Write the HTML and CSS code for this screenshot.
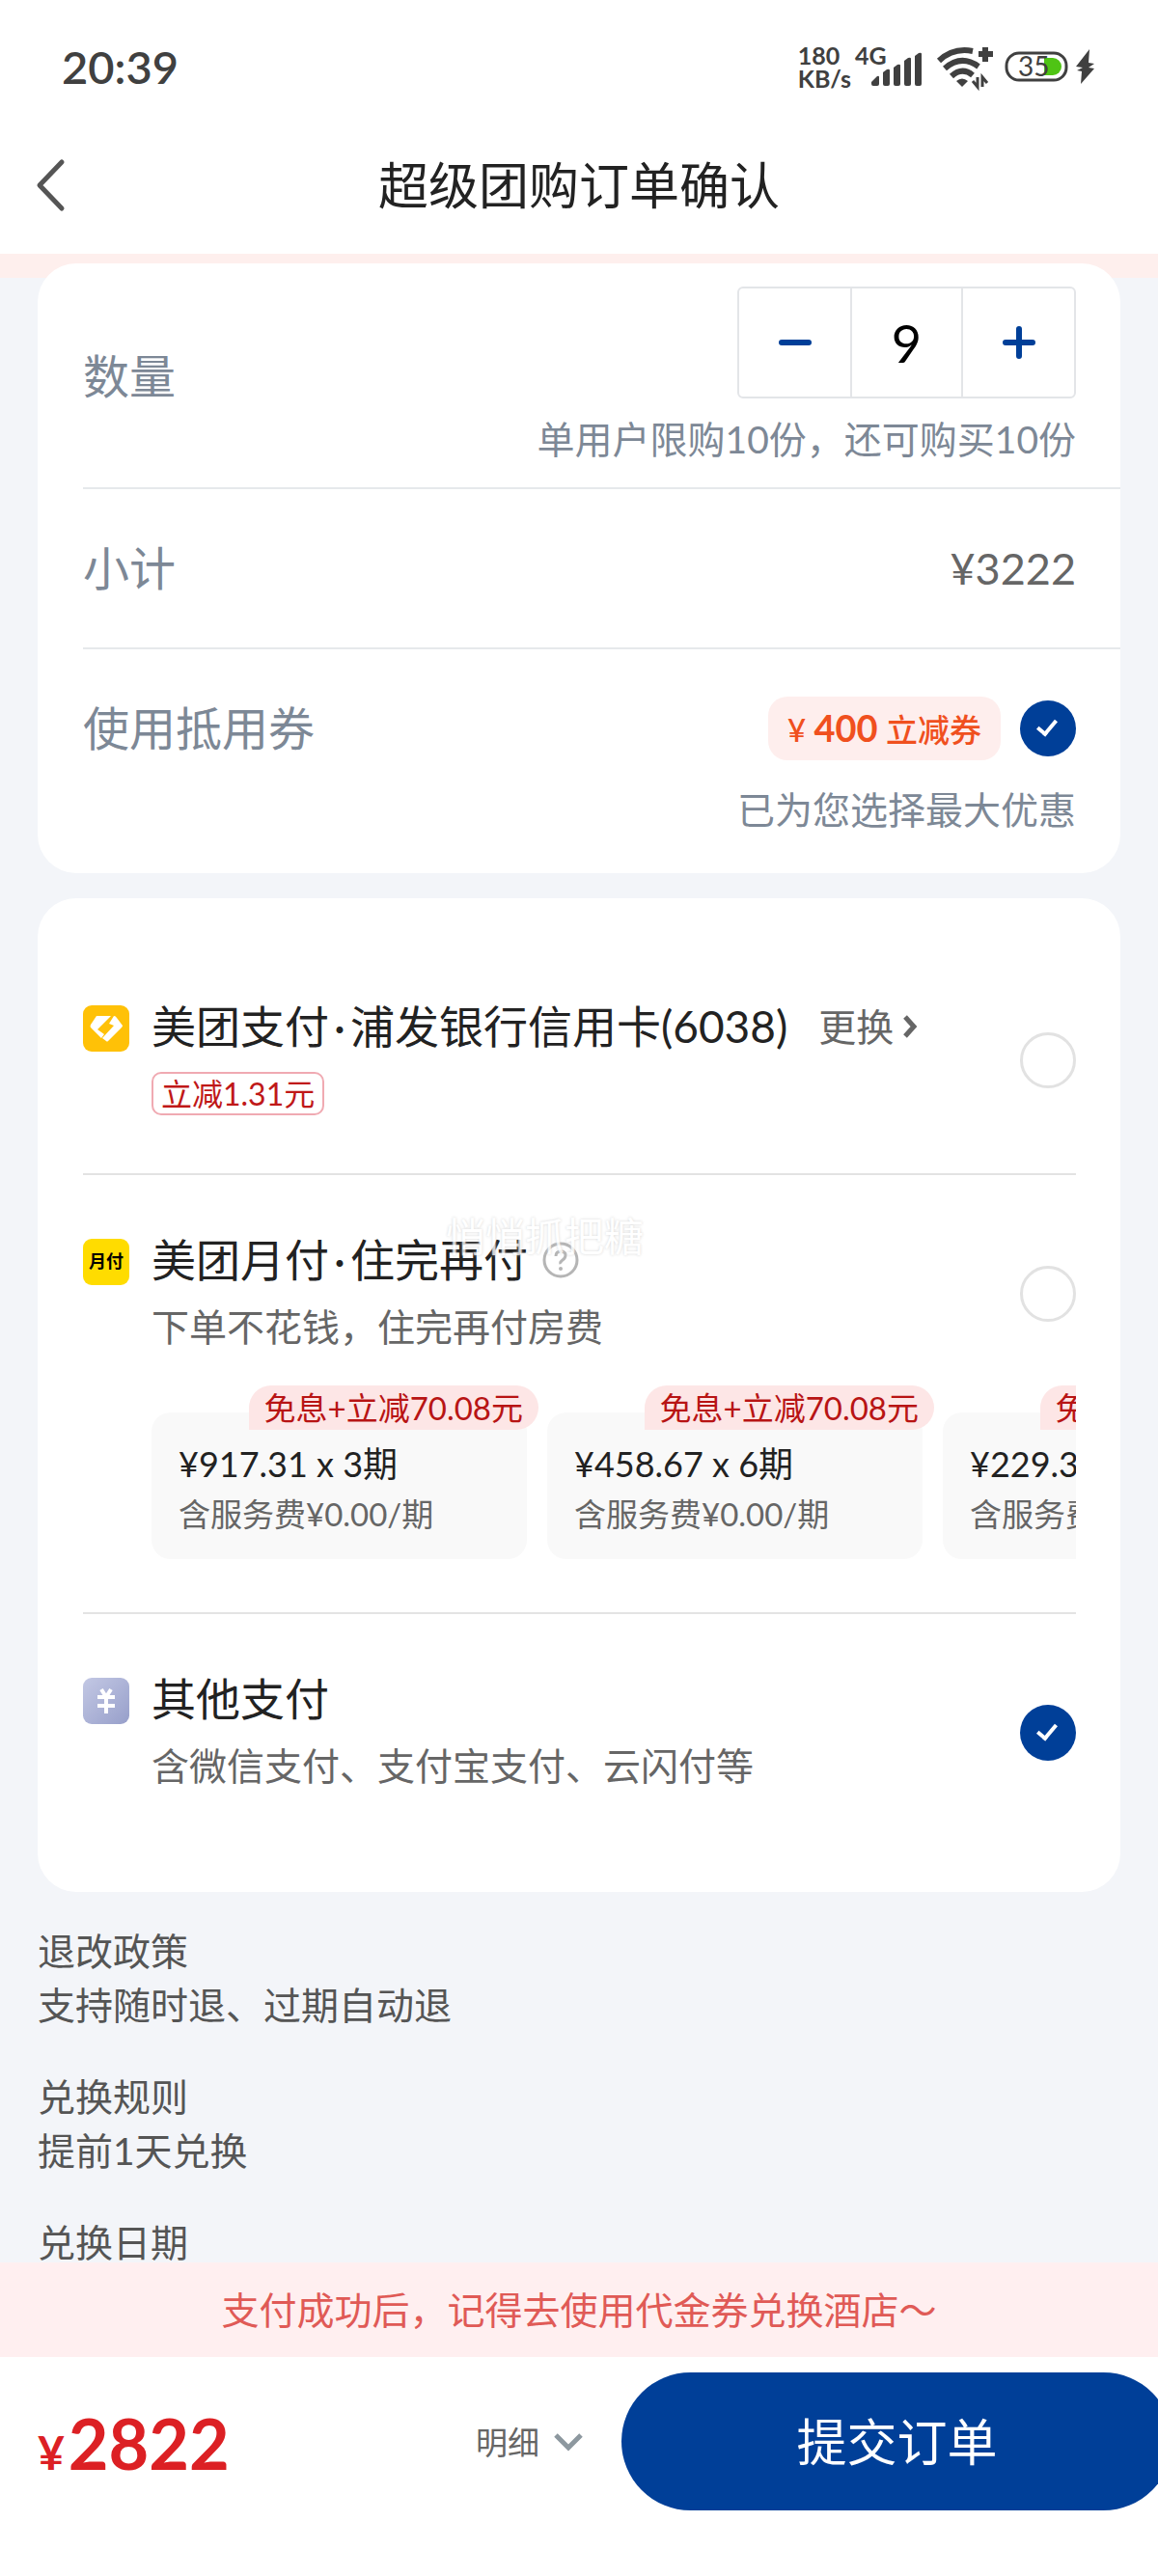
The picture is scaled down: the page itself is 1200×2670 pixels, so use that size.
FILE: index.html
```
<!DOCTYPE html>
<html lang="zh-CN">
<head>
<meta charset="utf-8">
<meta name="viewport" content="width=device-width">
<title>超级团购订单确认</title>
<link rel="stylesheet" href="styles.css">
</head>
<body>
<div class="page">

<div class="status_bar">
	<span class="clock">20:39</span>
	<div class="status_icons">
		<span class="speed">180<br>KB/s</span>
		<svg class="signal" width="74" height="46" viewBox="0 0 74 46">
			<text x="2" y="21" class="net">4G</text>
			<g fill="#404040">
				<path d="M19 41v-2l6-6q2-1 2 1v7q0 2-2 2h-4q-2 0-2-2z"/>
				<path d="M31 41V29l4-3q3-1 3 1v14q0 2-2 2h-3q-2 0-2-2z"/>
				<path d="M42 41V24l4-3q3-1 3 1v19q0 2-2 2h-3q-2 0-2-2z"/>
				<path d="M53 41V17l4-3q3-1 3 1v26q0 2-2 2h-3q-2 0-2-2z"/>
				<path d="M64 41V12l4-3q3-1 3 1v31q0 2-2 2h-3q-2 0-2-2z"/>
			</g>
		</svg>
		<svg class="wifi" width="60" height="46" viewBox="0 0 60 46">
			<g fill="none" stroke="#404040" stroke-width="6">
				<path d="M3 17Q18 3 38 7"/>
				<path d="M9 25Q26 10 44 23"/>
				<path d="M16 33Q27 23 38 32"/>
				<path d="M44 10h15M51 3v15"/>
			</g>
			<path d="M21 38q6-5 12 0l-6 6z" fill="#404040"/>
			<path d="M43 34v10l-5-6M48 44V34l5 6" fill="none" stroke="#404040" stroke-width="3"/>
		</svg>
		<svg class="battery" width="68" height="34" viewBox="0 0 68 34">
			<rect x="3" y="3" width="62" height="28" rx="13" fill="none" stroke="#404040" stroke-width="3"/>
			<path d="M42 8h9a9 9 0 0 1 0 18h-9z" fill="#4fc414"/>
			<text x="15" y="27" class="level">35</text>
		</svg>
		<svg class="bolt" width="22" height="36" viewBox="0 0 22 36"><path d="M15 0L1 18l7 1-6 3 5 1-1 13 14-16-6-1 6-4-6-1z" fill="#404040"/></svg>
	</div>
</div>

<header class="nav">
	<button class="back" aria-label="返回">
		<svg width="32" height="54" viewBox="0 0 32 54"><path d="M28 3L5 27l23 24" fill="none" stroke="#555" stroke-width="5" stroke-linecap="round" stroke-linejoin="round"/></svg>
	</button>
	<h1>超级团购订单确认</h1>
</header>

<main class="content">
	<section class="card order">
		<div class="row row_count">
			<span class="label">数量</span>
			<div class="right">
				<div class="stepper">
					<button aria-label="减少"><svg width="34" height="34" viewBox="0 0 34 34"><path d="M3 17h28" stroke="#003f98" stroke-width="6" stroke-linecap="round"/></svg></button>
					<input type="text" value="9" aria-label="数量">
					<button aria-label="增加"><svg width="34" height="34" viewBox="0 0 34 34"><path d="M3 17h28M17 3v28" stroke="#003f98" stroke-width="6" stroke-linecap="round"/></svg></button>
				</div>
				<span class="hint">单用户限购10份，还可购买10份</span>
			</div>
		</div>
		<div class="row row_sum">
			<span class="label">小计</span>
			<span class="sum">¥3222</span>
		</div>
		<div class="row row_coupon">
			<label class="coupon" for="coupon">
				<span class="label">使用抵用券</span>
				<span class="pill">¥ <b>400</b> 立减券</span>
				<input type="checkbox" class="check" id="coupon" checked>
			</label>
			<span class="hint">已为您选择最大优惠</span>
		</div>
	</section>

	<section class="card pay">
		<div class="method">
			<svg class="logo" width="48" height="48" viewBox="0 0 48 48">
				<rect width="48" height="48" rx="9" fill="#ffc107"/>
				<path d="M14 11h15L15 25l7 5-3 4L8 23q-1-1 0-3z" fill="#fff"/>
				<path d="M32 11q2 0 3 2l6 8q0 1-1 2L26 37q-1 1-2 0l-4-3 12-13-5-2z" fill="#fff"/>
			</svg>
			<div class="info">
				<div class="name"><label for="pay1">美团支付<span class="dot">·</span>浦发银行信用卡(6038)</label>
					<button class="change">更换<svg width="18" height="28" viewBox="0 0 18 28"><path d="M4 4l9 10-9 10" fill="none" stroke="#666" stroke-width="5"/></svg></button>
				</div>
				<span class="tag">立减1.31元</span>
			</div>
			<input type="radio" class="check" name="pay" id="pay1">
		</div>

		<div class="method">
			<span class="logo logo_month">月付</span>
			<div class="info">
				<div class="name"><label for="pay2">美团月付<span class="dot">·</span>住完再付</label>
					<button class="help" aria-label="说明"><svg width="40" height="40" viewBox="0 0 40 40"><circle cx="20" cy="20" r="17" fill="none" stroke="#b5b5b5" stroke-width="3"/><path d="M15 16q0-5 5-5t5 4q0 3-3 5t-2 4" fill="none" stroke="#b5b5b5" stroke-width="3"/><circle cx="20" cy="29" r="2" fill="#b5b5b5"/></svg></button>
				</div>
				<span class="desc">下单不花钱，住完再付房费</span>
			</div>
			<input type="radio" class="check" name="pay" id="pay2">
			<div class="plans">
				<button class="plan"><span class="badge">免息+立减70.08元</span><span class="amount">¥917.31 x 3期</span><span class="fee">含服务费¥0.00/期</span></button>
				<button class="plan"><span class="badge">免息+立减70.08元</span><span class="amount">¥458.67 x 6期</span><span class="fee">含服务费¥0.00/期</span></button>
				<button class="plan"><span class="badge">免息+立减70.08元</span><span class="amount">¥229.34 x 12期</span><span class="fee">含服务费¥0.00/期</span></button>
			</div>
			<span class="watermark">悄悄抓把糖</span>
		</div>

		<div class="method">
			<svg class="logo" width="48" height="48" viewBox="0 0 48 48">
				<defs><linearGradient id="g" x1="0" y1="0" x2="1" y2="1"><stop offset="0" stop-color="#c3c8e4"/><stop offset="1" stop-color="#979fca"/></linearGradient></defs>
				<rect width="48" height="48" rx="9" fill="url(#g)"/>
				<path d="M19 12l5 8 5-8M15 20h18M15 29h18M24 20v17" fill="none" stroke="#fff" stroke-width="4"/>
			</svg>
			<div class="info">
				<div class="name"><label for="pay3">其他支付</label></div>
				<span class="desc">含微信支付、支付宝支付、云闪付等</span>
			</div>
			<input type="radio" class="check" name="pay" id="pay3" checked>
		</div>
	</section>

	<section class="rules">
		<h2>退改政策</h2>
		<p>支持随时退、过期自动退</p>
		<h2>兑换规则</h2>
		<p>提前1天兑换</p>
		<h2>兑换日期</h2>
	</section>
</main>

<footer class="bottom">
	<p class="notice">支付成功后，记得去使用代金券兑换酒店～</p>
	<div class="submit_bar">
		<span class="total"><small>¥</small>2822</span>
		<button class="detail">明细<svg width="32" height="22" viewBox="0 0 32 22"><path d="M3 4l13 13L29 4" fill="none" stroke="#8d989f" stroke-width="5"/></svg></button>
		<button class="submit">提交订单</button>
	</div>
</footer>

</div>
</body>
</html>
```
FILE: styles.css
```
* {
	box-sizing: border-box;
}
body {
	margin: 0;
	background: #f3f5f9;
	font-family: Lato, "Noto Sans CJK SC", sans-serif;
	font-size: 39px;
	line-height: 56px;
	color: #222;
}
h1, h2, p {
	margin: 0;
	font-size: inherit;
	font-weight: normal;
}
button, input {
	margin: 0;
	padding: 0;
	border: 0;
	background: none;
	font: inherit;
	color: inherit;
}
svg {
	display: block;
	flex: none;
	overflow: visible;
}
.page {
	display: flex;
	flex-direction: column;
	height: 100vh;
	overflow: hidden;
}

/* status bar */
.status_bar {
	flex: none;
	display: flex;
	align-items: center;
	justify-content: space-between;
	height: 138px;
	padding: 0 64px;
	background: #fff;
	color: #404040;
}
.clock {
	font-size: 47px;
	font-weight: 600;
}
.status_icons {
	display: flex;
	align-items: center;
}
.speed {
	font-size: 25px;
	line-height: 24px;
	font-weight: bold;
}
.signal {
	margin-left: 2px;
}
.wifi {
	margin-left: 12px;
}
.battery {
	margin-left: 10px;
}
.bolt {
	margin-left: 6px;
}
.net {
	font-size: 25px;
	font-weight: bold;
	fill: #404040;
}
.level {
	font-size: 28px;
	fill: #404040;
}

/* title */
.nav {
	flex: none;
	display: grid;
	grid-template-columns: 100px 1fr 100px;
	align-items: center;
	height: 125px;
	padding-bottom: 18px;
	background: #fff;
}
.back {
	padding-left: 36px;
}
.nav h1 {
	font-size: 52px;
	text-align: center;
}

.content {
	flex: 1;
	min-height: 0;
	overflow: hidden;
	padding: 10px 39px 0;
	background: linear-gradient(#feefed 25px, transparent 25px);
}
.card {
	background: #fff;
	border-radius: 40px;
}

/* order card */
.order {
	padding-left: 47px;
}
.row {
	padding-right: 46px;
	border-bottom: 2px solid #e6e9eb;
}
.row:last-child {
	border-bottom: 0;
}
.label {
	font-size: 48px;
	color: #7d8896;
}
.hint {
	color: #7d8896;
}
.row_count, .row_sum {
	display: flex;
	align-items: center;
	justify-content: space-between;
}
.row_count {
	padding-top: 24px;
	padding-bottom: 22px;
}
.right {
	display: flex;
	flex-direction: column;
	align-items: flex-end;
	gap: 14px;
}
.stepper {
	display: flex;
	border: 2px solid #e3e5e8;
	border-radius: 6px;
}
.stepper button, .stepper input {
	display: grid;
	place-items: center;
	width: 115px;
	height: 112px;
}
.stepper input {
	width: 117px;
	border: solid #e3e5e8;
	border-width: 0 2px;
	font-size: 54px;
	text-align: center;
	color: #000;
}
.row_sum {
	height: 166px;
}
.sum {
	font-size: 45px;
	color: #666;
}
.row_coupon {
	padding-top: 49px;
	padding-bottom: 38px;
	text-align: right;
}
.coupon {
	display: flex;
	align-items: center;
	gap: 20px;
	margin-bottom: 23px;
	text-align: left;
}
.coupon .label {
	flex: 1;
}
.pill {
	padding: 4px 20px;
	border-radius: 20px;
	background: #feeeed;
	color: #f0501e;
	font-size: 33px;
	font-weight: 500;
}
.pill b {
	font-size: 38px;
}
.check {
	appearance: none;
	flex: none;
	display: block;
	width: 58px;
	height: 58px;
	border: 3px solid #e2e2e2;
	border-radius: 50%;
}
.check:checked {
	border: 0;
	background: #003f98;
}
.check:checked::before {
	content: "";
	display: block;
	width: 12px;
	height: 20px;
	margin: 16px 0 0 22px;
	box-sizing: border-box;
	border: solid #fff;
	border-width: 0 4px 4px 0;
	transform: rotate(40deg);
}

/* pay methods */
.pay {
	margin-top: 26px;
	padding: 45px 46px 48px 47px;
}
.method {
	position: relative;
	display: grid;
	grid-template-columns: 49px minmax(0, 1fr) 58px;
	column-gap: 22px;
	align-items: center;
	padding: 60px 0 55px;
	border-bottom: 2px solid #e3e3e3;
}
.method:last-child {
	border-bottom: 0;
}
.logo {
	align-self: start;
	margin-top: 6px;
}
.logo_month {
	width: 48px;
	height: 48px;
	border-radius: 9px;
	background: #ffdc00;
	color: #000;
	font-size: 18px;
	font-weight: bold;
	line-height: 46px;
	text-align: center;
}
.name {
	display: flex;
	align-items: center;
	height: 56px;
	font-size: 46px;
}
.dot {
	padding: 0 5px;
}
.change {
	display: flex;
	align-items: center;
	gap: 8px;
	margin-left: 32px;
	font-size: 39px;
	color: #666;
}
.help {
	margin-left: 14px;
}
.desc {
	display: block;
	margin-top: 13px;
	color: #666;
}
.tag {
	display: block;
	width: fit-content;
	margin: 19px 0 5px;
	padding: 0 8px;
	border: 2px solid #f0aab2;
	border-radius: 10px;
	font-size: 32px;
	line-height: 41px;
	color: #c01818;
}
.plans {
	grid-column: 2 / 4;
	display: flex;
	gap: 21px;
	overflow: hidden;
	padding-top: 61px;
}
.plan {
	position: relative;
	flex: none;
	width: 389px;
	height: 152px;
	padding: 0 28px;
	border-radius: 20px;
	background: #f9f9f9;
	text-align: left;
}
.amount, .fee {
	display: block;
	white-space: nowrap;
}
.amount {
	padding-top: 4px;
	font-size: 36px;
	line-height: 54px;
}
.fee {
	font-size: 33px;
	line-height: 50px;
	color: #666;
}
.badge {
	position: absolute;
	top: -28px;
	right: -12px;
	padding: 0 16px;
	border-radius: 23px 23px 23px 0;
	background: #fde6e6;
	font-size: 33px;
	line-height: 46px;
	white-space: nowrap;
	color: #b81414;
}
.watermark {
	position: absolute;
	top: 36px;
	left: 376px;
	font-size: 41px;
	color: #fff;
	text-shadow: 0 0 3px #ccc;
	opacity: .8;
}

.rules {
	padding-top: 33px;
	color: #555;
}
.rules p {
	margin-bottom: 39px;
}

/* bottom bar */
.bottom {
	flex: none;
	background: #fff;
}
.notice {
	padding: 21px 0;
	background: #ffeff0;
	color: #e05a56;
	text-align: center;
}
.submit_bar {
	display: flex;
	align-items: center;
	padding: 16px 0 68px 39px;
	overflow: hidden;
}
.total {
	flex: 1;
	padding-top: 12px;
	font-size: 72px;
	font-weight: bold;
	color: #dc2024;
}
.total small {
	margin-right: 4px;
	font-size: 48px;
}
.detail {
	display: flex;
	align-items: center;
	gap: 14px;
	margin-right: 39px;
	font-size: 33px;
	color: #666;
}
.submit {
	flex: none;
	width: 571px;
	height: 143px;
	margin-right: -15px;
	border-radius: 72px;
	background: #003f98;
	color: #fff;
	font-size: 52px;
}
```
